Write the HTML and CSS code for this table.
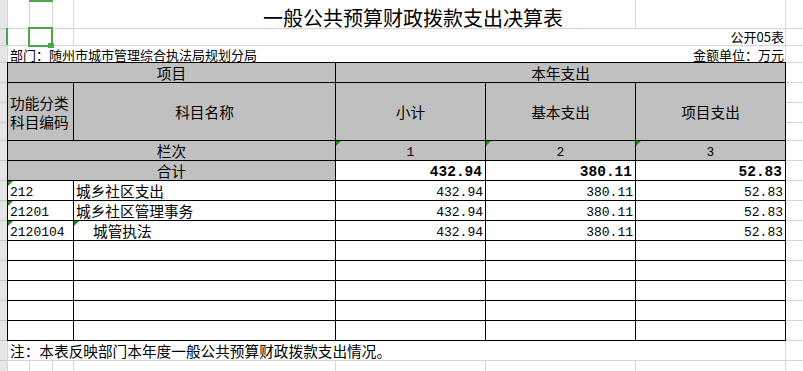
FILE: index.html
```html
<!DOCTYPE html>
<html lang="zh-CN">
<head>
<meta charset="utf-8">
<title>一般公共预算财政拨款支出决算表</title>
<link rel="stylesheet" href="styles.css">
</head>
<body>
<div class="page">
  <div class="rowhdr">
    <div class="rh h29"></div>
    <div class="rh h17 sel"></div>
    <div class="rh h17"></div>
    <div class="rh h20"></div>
    <div class="rh h20"></div>
    <div class="rh h20"></div>
    <div class="rh h18"></div>
    <div class="rh h20"></div>
    <div class="rh h20"></div>
    <div class="rh h20"></div>
    <div class="rh h20"></div>
    <div class="rh h20"></div>
    <div class="rh h20"></div>
    <div class="rh h20"></div>
    <div class="rh h20"></div>
    <div class="rh h20"></div>
    <div class="rh h20"></div>
    <div class="rh h20"></div>
    <div class="rh h20"></div>
  </div>

  <div class="sheet">
    <div class="line r1">
      <div class="c ca"></div>
      <div class="c cb colmark"></div>
      <div class="c cc"></div>
      <div class="c title">一般公共预算财政拨款支出决算表</div>
      <div class="c cg"></div>
    </div>
    <div class="line r2">
      <div class="c ca"></div>
      <div class="c cb"><span class="selbox"></span><span class="handle"></span></div>
      <div class="c cc"></div>
      <div class="c form">公开05表</div>
    </div>
    <div class="line r3">
      <span>部门：随州市城市管理综合执法局规划分局</span>
      <span>金额单位：万元</span>
    </div>

    <div class="tbl">
      <div class="hd span2 ctr">项目</div>
      <div class="hd span3 ctr">本年支出</div>

      <div class="hd codehd">功能分类<br>科目编码</div>
      <div class="hd mid">科目名称</div>
      <div class="hd mid">小计</div>
      <div class="hd mid">基本支出</div>
      <div class="hd mid">项目支出</div>

      <div class="hd span2 ctr">栏次</div>
      <div class="hd idx flag">1</div>
      <div class="hd idx flag">2</div>
      <div class="hd idx flag">3</div>

      <div class="hd span2 ctr">合计</div>
      <div class="num bold">432.94</div>
      <div class="num bold">380.11</div>
      <div class="num bold">52.83</div>

      <div class="code flag">212</div>
      <div class="name">城乡社区支出</div>
      <div class="num">432.94</div>
      <div class="num">380.11</div>
      <div class="num">52.83</div>

      <div class="code flag">21201</div>
      <div class="name">城乡社区管理事务</div>
      <div class="num">432.94</div>
      <div class="num">380.11</div>
      <div class="num">52.83</div>

      <div class="code flag">2120104</div>
      <div class="name indent flag">城管执法</div>
      <div class="num">432.94</div>
      <div class="num">380.11</div>
      <div class="num">52.83</div>

      <div></div><div></div><div></div><div></div><div></div>
      <div></div><div></div><div></div><div></div><div></div>
      <div></div><div></div><div></div><div></div><div></div>
      <div></div><div></div><div></div><div></div><div></div>
      <div></div><div></div><div></div><div></div><div></div>
    </div>

    <div class="line r18">注：本表反映部门本年度一般公共预算财政拨款支出情况。</div>
    <div class="line r19">
      <div class="c ca"></div>
      <div class="c cb"></div>
      <div class="c cc"></div>
      <div class="c cd"></div>
      <div class="c ce"></div>
      <div class="c cf"></div>
      <div class="c cg"></div>
    </div>
  </div>

  <div class="filler">
    <div class="rh h29"></div>
    <div class="rh h17"></div>
    <div class="rh h17"></div>
    <div class="rh h20"></div>
    <div class="rh h20"></div>
    <div class="rh h20"></div>
    <div class="rh h18"></div>
    <div class="rh h20"></div>
    <div class="rh h20"></div>
    <div class="rh h20"></div>
    <div class="rh h20"></div>
    <div class="rh h20"></div>
    <div class="rh h20"></div>
    <div class="rh h20"></div>
    <div class="rh h20"></div>
    <div class="rh h20"></div>
    <div class="rh h20"></div>
    <div class="rh h20"></div>
    <div class="rh h20"></div>
  </div>
</div>
</body>
</html>
```

FILE: styles.css
```css
* {
  box-sizing: border-box;
}

html,
body {
  margin: 0;
  padding: 0;
  background: #fff;
}

body {
  font-family: "Noto Sans CJK SC", "Noto Sans", sans-serif;
  color: #000;
}

.page {
  display: flex;
  width: 803px;
  height: 371px;
  overflow: hidden;
}

/* row header strip and right-hand filler */
.rowhdr,
.filler {
  display: flex;
  flex-direction: column;
}

.rowhdr {
  width: 7px;
  flex: none;
  background: #e6e6e6;
}

.rh {
  flex: none;
  border-bottom: 1px solid #cacaca;
}

.filler {
  flex: 1;
}

.filler .rh {
  border-bottom-color: #d6d6d6;
}

.h29 { height: 29px; }
.h20 { height: 20px; }
.h18 { height: 18px; }
.h17 { height: 17px; }

.sel {
  position: relative;
}

.sel::after {
  content: "";
  position: absolute;
  right: -1px;
  top: -1px;
  bottom: 0;
  width: 2px;
  background: #4aa84a;
}

/* sheet */
.sheet {
  width: 779px;
  flex: none;
  display: flex;
  flex-direction: column;
}

.line {
  display: flex;
  flex: none;
  border-left: 1px solid #d6d6d6;
  border-right: 1px solid #d6d6d6;
}

.c {
  flex: none;
  border-right: 1px solid #d6d6d6;
}

.ca { width: 22px; }
.cb { width: 23px; position: relative; }
.cc { width: 21px; }
.cd { width: 262px; }
.ce,
.cf { width: 150px; }
.cg { flex: 1; border-right: none; }

.r1 {
  height: 29px;
  border-bottom: 1px solid #d6d6d6;
}

.colmark::before {
  content: "";
  position: absolute;
  top: 0;
  left: -1px;
  right: -1px;
  height: 2px;
  background: #4aa84a;
}

.title {
  width: 562px;
  display: flex;
  align-items: flex-end;
  padding-left: 189px;
  font-size: 20px;
  line-height: 20px;
  white-space: nowrap;
}

.r2 {
  height: 17px;
  border-bottom: 1px solid #d6d6d6;
}

.selbox {
  position: absolute;
  left: -2px;
  top: -2px;
  width: 25px;
  height: 20px;
  border: 2px solid #4aa84a;
  z-index: 2;
}

.handle {
  position: absolute;
  left: 18px;
  top: 14px;
  width: 6px;
  height: 5px;
  background: #4aa84a;
  z-index: 3;
}

.form {
  flex: 1;
  border-right: none;
  text-align: right;
  padding-right: 1px;
  font-size: 13px;
  line-height: 15px;
  white-space: nowrap;
}

.r3 {
  height: 16px;
  justify-content: space-between;
  align-items: flex-start;
  padding: 1px 1px 0 2px;
  font-size: 13px;
  line-height: 15px;
  white-space: nowrap;
}

/* table */
.tbl {
  display: grid;
  grid-template-columns: 65px 261px 149px 149px 149px;
  grid-template-rows: 19px 57px 19px 19px repeat(8, 19px);
  gap: 1px;
  padding: 1px;
  width: 779px;
  background: #000;
  font-size: 14.67px;
  line-height: 19px;
  flex: none;
}

.tbl > div {
  background: #fff;
  white-space: nowrap;
  overflow: hidden;
}

.tbl > .hd {
  background: #c0c0c0;
}

.span2 { grid-column: span 2; }
.span3 { grid-column: span 3; }

.ctr {
  text-align: center;
}

.mid {
  display: flex;
  align-items: center;
  justify-content: center;
}

.codehd {
  display: flex;
  align-items: center;
  padding-left: 2px;
  padding-top: 1px;
}

.idx {
  text-align: center;
  font-family: "Liberation Mono", monospace;
  font-size: 13px;
  padding-top: 4px;
  line-height: 15px;
}

.code {
  padding-left: 2px;
  font-family: "Liberation Mono", monospace;
  font-size: 13px;
  padding-top: 4px;
  line-height: 15px;
}

.name {
  padding-left: 2px;
}

.indent {
  padding-left: 19px;
}

.num {
  text-align: right;
  padding-right: 2px;
  font-family: "Liberation Mono", monospace;
  font-size: 13px;
  padding-top: 4px;
  line-height: 15px;
}

.tbl > .bold {
  font-weight: bold;
  font-size: 14.5px;
  padding-top: 4px;
  padding-right: 3px;
  line-height: 15px;
}

.flag {
  position: relative;
}

.flag::before {
  content: "";
  position: absolute;
  top: 0;
  left: 0;
  border-top: 5px solid #1e8c24;
  border-right: 5px solid transparent;
}

/* footer rows */
.r18 {
  height: 20px;
  border-bottom: 1px solid #d6d6d6;
  padding-left: 2px;
  font-size: 14.67px;
  line-height: 19px;
  white-space: nowrap;
}

.r19 {
  height: 11px;
}
```
